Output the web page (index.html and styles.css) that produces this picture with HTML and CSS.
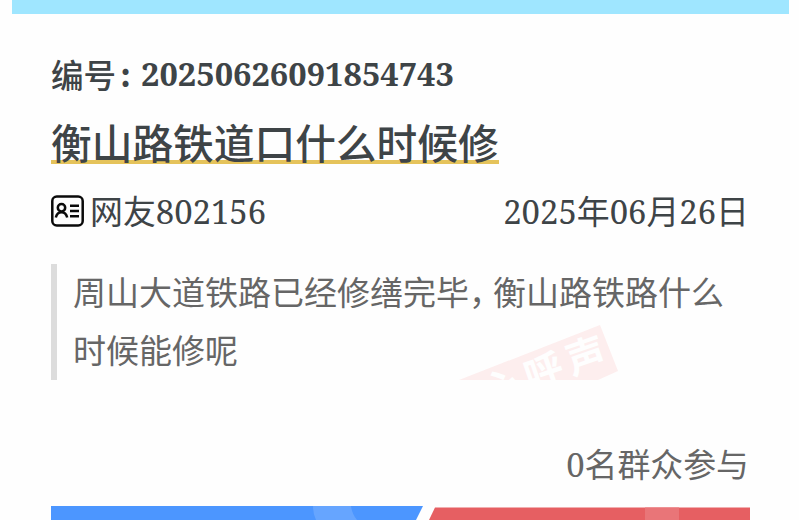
FILE: index.html
```html
<!DOCTYPE html>
<html lang="zh-CN">
<head>
<meta charset="utf-8">
<title>衡山路铁道口什么时候修</title>
<link rel="stylesheet" href="styles.css">
</head>
<body>
<div class="banner"></div>
<main class="post">
  <p class="serial"><span class="label">编号<span class="colon">:</span></span><span class="serial-no">20250626091854743</span></p>
  <h1 class="title"><span class="underlined">衡山路铁道口什么时候修</span></h1>
  <div class="meta">
    <span class="user">
      <svg class="card-icon" viewBox="0 0 33 32" fill="none" stroke="#0a0a0a" stroke-width="2.5">
        <rect x="1.3" y="1.500" width="30.400" height="29" rx="4.500"/>
        <circle cx="10.500" cy="12.800" r="3.700"/>
        <path d="M4.800 22.500C6.500 15.500 14.500 15.500 16.200 22.500M19 10.800h9M19 16h9M19 21.200h9"/>
      </svg>
      <span class="name">网友<span class="num">802156</span></span>
    </span>
    <span class="date"><span class="num">2025</span>年<span class="num">06</span>月<span class="num">26</span>日</span>
  </div>
  <blockquote class="quote">
    <svg class="stamp" viewBox="0 0 162 56">
      <path d="M1 56L142 1L160 47L140 56Z" fill="#fdeeee"/>
      <g class="stamp-text">
        <text transform="translate(128 32) rotate(-19)" dy="14">声</text>
        <text transform="translate(86 48) rotate(-19)" dy="14">呼</text>
        <text transform="translate(44 64) rotate(-19)" dy="14">心</text>
      </g>
    </svg>
    <p class="line">周山大道铁路已经修缮完毕<span class="comma">，</span>衡山路铁路什么</p>
    <p class="line">时候能修呢</p>
  </blockquote>
  <p class="count"><span class="num">0</span>名群众参与</p>
  <svg class="vote" viewBox="0 0 699 14">
    <path d="M0 0H372L365 14H0Z" fill="#4c96ff"/>
    <path d="M262 0H300Q301 8 306 14H265Q262 8 262 0Z" fill="#66a5ff"/>
    <path d="M384 1.500H699V14H378Z" fill="#e65f62"/>
    <path d="M594 1.500H628V14H594Z" fill="#e97578"/>
  </svg>
</main>
</body>
</html>
```
FILE: styles.css
```css
* { box-sizing: border-box; margin: 0; padding: 0; }
body { width: 799px; height: 520px; overflow: hidden; background: #fefefe; color: #3e4447; font-family: "Noto Serif", "Noto Sans CJK SC", sans-serif; }
.banner { height: 14px; margin: 0 10px 0 12px; background: #9fe6ff; }
.post { padding: 35px 50px 0 51px; }
.num, .serial-no { font-family: "Noto Serif", "DejaVu Serif", serif; }
.serial { display: flex; height: 50px; line-height: 50px; font-size: 32.6px; }
.label { width: 90px; font-weight: 500; white-space: nowrap; }
.colon { position: relative; top: -1px; margin-left: 4px; font-family: "Noto Sans CJK SC", sans-serif; font-weight: 700; }
.serial-no { font-weight: 700; }
.title { height: 89px; font-size: 40.7px; line-height: 89px; font-weight: 500; }
.underlined { background: linear-gradient(#e5c35b, #e5c35b) 0 calc(100% - 7px) / 100% 4px no-repeat; }
.meta { display: flex; justify-content: space-between; height: 48px; line-height: 48px; font-size: 32.9px; }
.user { display: flex; align-items: center; gap: 6px; }
.card-icon { width: 33px; height: 32px; position: relative; top: -1px; }
.quote { position: relative; height: 116px; margin-top: 28px; padding-left: 16px; border-left: 6px solid #dcdcdc; color: #666; font-size: 33px; line-height: 58px; white-space: nowrap; }
.line { position: relative; }
.comma { letter-spacing: -9px; }
.stamp { position: absolute; left: 401px; bottom: 0; width: 162px; height: 56px; overflow: hidden; }
.stamp-text { fill: #fefefe; font-family: "Noto Sans CJK SC", sans-serif; font-size: 39px; font-weight: 700; text-anchor: middle; }
.count { text-align: right; font-size: 32.9px; height: 126px; padding-top: 59px; color: #666; }
.vote { display: block; width: 699px; height: 14px; }
```
